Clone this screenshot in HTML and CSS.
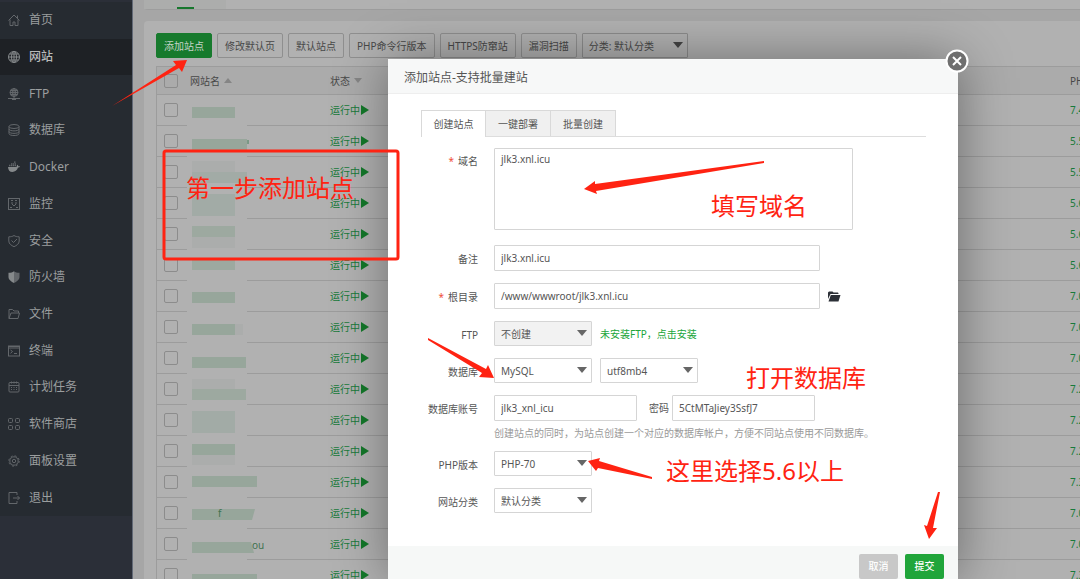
FILE: index.html
```html
<!DOCTYPE html>
<html lang="zh-CN">
<head>
<meta charset="utf-8">
<title>网站</title>
<link rel="stylesheet" href="styles.css">
</head>
<body>
<div class="app">
  <nav class="sidebar">
    <ul class="menu">
      <li><a href="#"><svg viewBox="0 0 12 12"><path d="M.5 6.500 6 1l5.500 5.500M2 5.500v6h3V8h2v3.500h3v-6M9.500 4V1.500"/></svg>首页</a></li>
      <li class="active"><a href="#"><svg viewBox="0 0 12 12"><circle cx="6" cy="6" r="5.500"/><ellipse cx="6" cy="6" rx="2.500" ry="5.500"/><path d="M.5 6h11M6 .5v11M1.500 3h9M1.500 9h9"/></svg>网站</a></li>
      <li><a href="#"><svg viewBox="0 0 12 12"><circle cx="6" cy="4.500" r="4"/><ellipse cx="6" cy="4.500" rx="1.800" ry="4"/><path d="M2 4.500h8M2.500 2.500h7M2.500 6.500h7M6 .5v10M0 10.500h12M4 11.500h4"/></svg>FTP</a></li>
      <li><a href="#"><svg viewBox="0 0 12 12"><ellipse cx="6" cy="2.500" rx="5" ry="2"/><path d="M1 2.500v7c0 2.700 10 2.700 10 0v-7M1 5c0 2.500 10 2.500 10 0M1 7.500c0 2.500 10 2.500 10 0"/></svg>数据库</a></li>
      <li><a href="#"><svg viewBox="0 0 12 12"><path class="solid" d="M0 6h8.500c.5-.8.2-1.500.8-2.200.8.500.9 1 .9 1.400.8-.1 1.400 0 1.800.3-.3.800-1 1.100-2 1.100C9 9.500 7 11 4.500 11 1.500 11 .2 9 0 6z"/><path d="M1 4.500h7M3 2.800h5M6 1.200h2" stroke-dasharray="1.500 .5" stroke-width="1.300"/></svg>Docker</a></li>
      <li><a href="#"><svg viewBox="0 0 12 12"><rect x=".5" y=".5" width="11" height="11"/><path d="M3 2.500h2M7 2.500h2M4 4v2l2 2 2-2V4M2 9.500h2M8 9.500h2"/></svg>监控</a></li>
      <li><a href="#"><svg viewBox="0 0 12 12"><path d="M6 .5C4.500 1.500 3 1.800.8 1.800V6c0 3 2.700 4.500 5.200 5.700C8.500 10.500 11.200 9 11.200 6V1.800C9 1.800 7.500 1.500 6 .5zM3.500 5.500l2 2 3.500-3.500"/></svg>安全</a></li>
      <li><a href="#"><svg viewBox="0 0 12 12"><path class="solid" d="M6 .3C4.500 1.500 3 1.800.5 1.800V6c0 3 3 4.700 5.500 5.900z"/><path class="solid shade" d="M6 .3C7.500 1.500 9 1.800 11.500 1.800V6c0 3-3 4.700-5.500 5.900z"/></svg>防火墙</a></li>
      <li><a href="#"><svg viewBox="0 0 12 12"><path d="M1 10.500v-9h3.500L6 3h4.500v2M1 10.500 3 5h8.500l-1.500 5.500z"/></svg>文件</a></li>
      <li><a href="#"><svg viewBox="0 0 12 12"><rect x=".5" y="1" width="11" height="10"/><path d="M.5 1.500h11M.5 3h11M2.500 5l2 1.500-2 1.800M6 8.500h3"/></svg>终端</a></li>
      <li><a href="#"><svg viewBox="0 0 12 12"><rect x="1" y="1.500" width="10" height="9.500" rx="1"/><path d="M1 4.500h10M3.500.5v2M6 .5v2M8.500.5v2M3 6.500h1M5.500 6.500h1M8 6.500h1M3 8.500h1M5.500 8.500h1M8 8.500h1"/></svg>计划任务</a></li>
      <li><a href="#"><svg viewBox="0 0 12 12"><rect x=".5" y=".5" width="4" height="4" rx="1"/><rect x="7.500" y=".5" width="4" height="4" rx="1"/><rect x=".5" y="7.500" width="4" height="4" rx="1"/><rect x="7.500" y="7.500" width="4" height="4" rx="1"/></svg>软件商店</a></li>
      <li><a href="#"><svg viewBox="0 0 12 12"><circle cx="6" cy="6" r="4.200"/><circle cx="6" cy="6" r="1.700"/><circle cx="6" cy="6" r="5.200" stroke-dasharray="2 2.080"/></svg>面板设置</a></li>
      <li><a href="#"><svg viewBox="0 0 12 12"><path d="M9 3V.5H1v11h8V9M5 6h6.500M9.500 4l2 2-2 2"/></svg>退出</a></li>
    </ul>
  </nav>

  <main class="content">
    <div class="tabstrip"><span class="tabstrip-item"></span></div>
    <section class="panel">
      <div class="toolbar">
        <button class="btn primary">添加站点</button>
        <button class="btn">修改默认页</button>
        <button class="btn">默认站点</button>
        <button class="btn">PHP命令行版本</button>
        <button class="btn">HTTPS防窜站</button>
        <button class="btn">漏洞扫描</button>
        <span class="select filter"><select aria-label="分类"><option>分类: 默认分类</option></select></span>
      </div>
      <table class="sites">
        <colgroup><col class="col-check"><col class="col-name"><col><col class="col-php"></colgroup>
        <thead>
          <tr><th><input type="checkbox" aria-label="全选"></th><th>网站名<i class="sort up"></i></th><th>状态<i class="sort down"></i></th><th>PHP</th></tr>
        </thead>
        <tbody>
          <tr><td><input type="checkbox" aria-label="选择"></td><td><svg class="mosaic"><rect x="5" y="11" width="43" height="11"/></svg></td><td>运行中<i class="play"></i></td><td>7.4</td></tr>
          <tr><td><input type="checkbox" aria-label="选择"></td><td><svg class="mosaic"><rect x="5" y="12" width="55" height="11"/><path d="M61 13v4" stroke="#45805a"/></svg></td><td>运行中<i class="play"></i></td><td>5.5</td></tr>
          <tr><td><input type="checkbox" aria-label="选择"></td><td><svg class="mosaic"><rect class="faint" x="5" y="3" width="43" height="11"/><rect class="pale" x="5" y="14" width="55" height="11"/></svg></td><td>运行中<i class="play"></i></td><td>5.5</td></tr>
          <tr><td><input type="checkbox" aria-label="选择"></td><td><svg class="mosaic"><rect class="pale" x="5" y="5" width="43" height="22"/></svg></td><td>运行中<i class="play"></i></td><td>5.6</td></tr>
          <tr><td><input type="checkbox" aria-label="选择"></td><td><svg class="mosaic"><rect class="mid" x="5" y="6" width="43" height="11"/><rect class="faint" x="5" y="17" width="43" height="11"/></svg></td><td>运行中<i class="play"></i></td><td>5.6</td></tr>
          <tr><td><input type="checkbox" aria-label="选择"></td><td><svg class="mosaic"><rect class="mid" x="5" y="8" width="43" height="11"/></svg></td><td>运行中<i class="play"></i></td><td>5.6</td></tr>
          <tr><td><input type="checkbox" aria-label="选择"></td><td><svg class="mosaic"><rect x="5" y="10" width="43" height="11"/></svg></td><td>运行中<i class="play"></i></td><td>7.0</td></tr>
          <tr><td><input type="checkbox" aria-label="选择"></td><td><svg class="mosaic"><rect x="5" y="11" width="43" height="11"/><rect class="faint" x="48" y="11" width="8" height="11"/></svg></td><td>运行中<i class="play"></i></td><td>7.0</td></tr>
          <tr><td><input type="checkbox" aria-label="选择"></td><td><svg class="mosaic"><rect x="5" y="13" width="54" height="11"/></svg></td><td>运行中<i class="play"></i></td><td>7.0</td></tr>
          <tr><td><input type="checkbox" aria-label="选择"></td><td><svg class="mosaic"><rect class="faint" x="5" y="4" width="43" height="10"/><rect class="mid" x="5" y="14" width="54" height="11"/></svg></td><td>运行中<i class="play"></i></td><td>7.2</td></tr>
          <tr><td><input type="checkbox" aria-label="选择"></td><td><svg class="mosaic"><rect class="pale" x="5" y="5" width="43" height="22"/></svg></td><td>运行中<i class="play"></i></td><td>7.2</td></tr>
          <tr><td><input type="checkbox" aria-label="选择"></td><td><svg class="mosaic"><rect x="5" y="7" width="43" height="11"/><rect class="faint" x="5" y="18" width="43" height="10"/></svg></td><td>运行中<i class="play"></i></td><td>7.2</td></tr>
          <tr><td><input type="checkbox" aria-label="选择"></td><td><svg class="mosaic"><rect x="5" y="8" width="65" height="11"/></svg></td><td>运行中<i class="play"></i></td><td>7.3</td></tr>
          <tr><td><input type="checkbox" aria-label="选择"></td><td><svg class="mosaic"><path d="M5 10h63l-3 11H5z"/><text x="31" y="18">f</text></svg></td><td>运行中<i class="play"></i></td><td>7.0</td></tr>
          <tr><td><input type="checkbox" aria-label="选择"></td><td><svg class="mosaic"><path d="M5 12h59l3 11H5z"/><text x="65" y="19">ou</text></svg></td><td>运行中<i class="play"></i></td><td>7.0</td></tr>
          <tr><td><input type="checkbox" aria-label="选择"></td><td><svg class="mosaic"><rect x="5" y="13" width="65" height="11"/></svg></td><td>运行中<i class="play"></i></td><td>7.3</td></tr>
        </tbody>
      </table>
    </section>
  </main>
</div>

<div class="dialog" role="dialog" aria-labelledby="dialog-title">
  <button class="close" aria-label="关闭"><svg viewBox="0 0 24 24"><circle cx="12" cy="12" r="10.500"/><path d="m8 8 8 8M16 8l-8 8"/></svg></button>
  <h1 class="dialog-title" id="dialog-title">添加站点-支持批量建站</h1>
  <div class="dialog-body">
    <div class="tabs" role="tablist">
      <button class="tab current" role="tab">创建站点</button>
      <button class="tab" role="tab">一键部署</button>
      <button class="tab" role="tab">批量创建</button>
    </div>
    <form class="form" id="site-form">
      <label class="top" for="domain"><b>*</b>域名</label>
      <div><textarea id="domain">jlk3.xnl.icu</textarea></div>
      <label for="note">备注</label>
      <div><input class="long" id="note" type="text" value="jlk3.xnl.icu"></div>
      <label for="root"><b>*</b>根目录</label>
      <div><input class="long" id="root" type="text" value="/www/wwwroot/jlk3.xnl.icu"><svg class="folder" viewBox="0 0 14 11"><path d="M1 8V1.500L2 .5h3.500l1 1H11l.7 1.500H3.500z"/><path d="M3.800 4H13.500l-2 6.500H1.500z"/></svg></div>
      <label for="ftp">FTP</label>
      <div><span class="select disabled"><select id="ftp"><option>不创建</option></select></span><a class="install" href="#">未安装FTP，点击安装</a></div>
      <label for="db">数据库</label>
      <div><span class="select"><select id="db"><option>MySQL</option></select></span><span class="select"><select aria-label="字符集"><option>utf8mb4</option></select></span></div>
      <label for="account">数据库账号</label>
      <div><input id="account" type="text" value="jlk3_xnl_icu"><label class="inline" for="password">密码</label><input id="password" type="text" value="5CtMTaJiey3SsfJ7"></div>
      <p class="hint">创建站点的同时，为站点创建一个对应的数据库帐户，方便不同站点使用不同数据库。</p>
      <label for="php">PHP版本</label>
      <div><span class="select"><select id="php"><option>PHP-70</option></select></span></div>
      <label for="category">网站分类</label>
      <div><span class="select"><select id="category"><option>默认分类</option></select></span></div>
    </form>
  </div>
  <div class="dialog-footer">
    <button class="action cancel">取消</button>
    <button class="action submit" form="site-form">提交</button>
  </div>
</div>

<div class="notes">
  <svg class="marks">
    <rect x="164" y="151" width="234" height="108" rx="2"/>
    <path d="M112 106 176 65 173 61 187 60 182 72 179 68Z"/>
    <path d="M764 161 595 184 595 181 584 189 597 194 596 191 764 163Z"/>
    <path d="M428 338 486 369 488 365 494 378 479 377 482 373 428 340Z"/>
    <path d="M652 479 598 468 596 471 588 461 600 458 599 461 652 477Z"/>
    <path d="M938 492 927 526 924 525 929 539 937 528 933 528 940 492Z"/>
  </svg>
  <span class="note step">第一步添加站点</span>
  <span class="note domain">填写域名</span>
  <span class="note database">打开数据库</span>
  <span class="note version">这里选择5.6以上</span>
</div>
</body>
</html>
```

FILE: styles.css
```css
* { box-sizing: border-box; }

body {
  margin: 0;
  height: 100vh;
  overflow: hidden;
  position: relative;
  background: #a6a6a6;
  color: #484848;
  font: 10px/16px "Noto Sans", "Noto Sans CJK SC", sans-serif;
}

button, input, select, textarea {
  margin: 0;
  font: inherit;
  color: inherit;
}

a { text-decoration: none; }

.app { display: flex; height: 100%; }

/* Sidebar */
.sidebar {
  flex: none;
  width: 133px;
  background: #2b2f38;
  border-right: 1px solid #626976;
}

.menu {
  display: grid;
  grid-template-rows: repeat(14, 1fr);
  height: 514px;
  margin: 2px 0 0;
  padding: 0;
  list-style: none;
  background: #262b31;
}

.menu li { display: flex; }
.menu .active { background: #1e2125; }

.menu a {
  flex: 1;
  display: flex;
  align-items: center;
  gap: 9px;
  padding-left: 8px;
  color: #9b9e9f;
  font-size: 12px;
}

.menu svg {
  width: 12px;
  height: 12px;
  fill: none;
  stroke: #63676b;
  stroke-width: 1;
}

.menu .solid { fill: #85898b; stroke: none; }
.menu .shade { fill: #63676b; }
.menu .active a { color: #b8baba; font-weight: 500; }
.menu .active svg { stroke: #85898b; }

/* Main area */
.content {
  flex: 1;
  min-width: 0;
  padding-left: 11px;
  overflow: hidden;
}

.tabstrip {
  height: 10px;
  background: #b1b1b1;
  border-bottom: 1px solid #9d9d9d;
  border-radius: 0 0 0 4px;
}

.tabstrip-item {
  display: flex;
  align-items: flex-end;
  justify-content: center;
  width: 82px;
  height: 9px;
  background: #acadac;
}

.tabstrip-item::after {
  content: "";
  width: 17px;
  height: 2px;
  background: #17772d;
}

.panel {
  margin-top: 11px;
  padding: 12px 0 0 12px;
  background: #b1b1b1;
  border-radius: 4px 0 0 0;
}

.toolbar { display: flex; gap: 5px; margin-bottom: 8px; }

.toolbar > * { flex: none; height: 25px; }

.btn {
  padding: 0 7px;
  background: #b1b1b1;
  border: 1px solid #8f8f8f;
  border-radius: 2px;
  white-space: nowrap;
}

.btn.primary { background: #177a2d; border-color: #177a2d; color: #c3d3c6; }

.select { position: relative; display: inline-flex; width: 98px; height: 25px; }

.select select {
  width: 100%;
  padding: 0 20px 0 6px;
  appearance: none;
  background: #fff;
  border: 1px solid #d5d5d5;
  border-radius: 1px;
}

.select::after {
  content: "";
  position: absolute;
  top: 9px;
  right: 5px;
  border: 5px solid transparent;
  border-top: 6px solid #666;
  border-bottom: 0;
  pointer-events: none;
}

.select.disabled select { background: #f2f2f2; }
.select.filter { width: 106px; }
.select.filter select { background: #b1b1b1; border-color: #8c8c8c; }
.select.filter::after { border-top-color: #444; }

.sites {
  width: 100%;
  table-layout: fixed;
  border-collapse: separate;
  border-spacing: 0;
  border-top: 1px solid #9c9c9c;
  border-left: 1px solid #9c9c9c;
}

.col-check { width: 30px; }
.col-name { width: 143px; }
.col-php { width: 10px; }

.sites th, .sites td {
  height: 31px;
  padding: 0;
  border-bottom: 1px solid #9c9c9c;
  text-align: left;
  font-weight: 400;
  white-space: nowrap;
}

.sites th { height: 28px; background: #ababab; }
.sites th:nth-child(2) { padding-left: 3px; }
.sites td { color: #177a3a; }

.sites td:nth-child(2) {
  border-bottom: 0;
  background: linear-gradient(#9c9c9c, #9c9c9c) 60px 100% / 100% 1px no-repeat;
  background-position: left 60px bottom;
}

.sites tr > :first-child { padding-left: 7px; }

.sites input {
  display: block;
  width: 14px;
  height: 14px;
  appearance: none;
  border: 1px solid #8c8c8c;
  border-radius: 2px;
}

.sort { display: inline-block; margin: 0 0 2px 4px; border: 4px solid transparent; }
.sort.up { border-bottom: 5px solid #858585; border-top: 0; }
.sort.down { border-top: 5px solid #858585; border-bottom: 0; }

.play {
  display: inline-block;
  margin-left: 1px;
  vertical-align: -1px;
  border: 5px solid transparent;
  border-left: 8px solid #14792a;
  border-right: 0;
}

.mosaic { display: block; width: 82px; height: 30px; fill: #97a69b; }
.mosaic .mid { fill: #9da9a0; }
.mosaic .pale { fill: #a2aba6; }
.mosaic .faint { fill: #abadac; }
.mosaic text { fill: #3f7350; font-size: 10px; }

/* Dialog */
.dialog {
  position: absolute;
  top: 59px;
  bottom: 0;
  left: 388px;
  width: 570px;
  display: flex;
  flex-direction: column;
  background: #fff;
  box-shadow: 1px 1px 50px rgba(0, 0, 0, .4);
  color: #555;
}

.close {
  position: absolute;
  top: -10px;
  right: -11px;
  width: 24px;
  height: 24px;
  padding: 0;
  background: none;
  border: 0;
}

.close svg { display: block; fill: #6f6f6f; stroke: #fff; stroke-width: 2; }

.dialog-title {
  flex: none;
  margin: 0;
  padding: 3px 0 0 16px;
  background: #f7f8f8;
  border-bottom: 1px solid #eee;
  font-size: 12px;
  font-weight: 400;
  line-height: 31px;
}

.dialog-body { flex: 1; padding: 16px 32px 0 33px; }

.tabs { display: flex; height: 27px; border-bottom: 1px solid #ddd; }

.tab {
  width: 65px;
  padding: 0;
  background: #f0f0f0;
  border: 1px solid #d9d9d9;
  border-left-width: 0;
  border-bottom: 0;
}

.tab.current { height: 27px; background: #fff; border-left-width: 1px; }

.form {
  display: grid;
  grid-template-columns: 57px 1fr;
  column-gap: 16px;
  align-items: center;
  margin-top: 11px;
}

.form > div { display: flex; align-items: center; margin-bottom: 12px; }

.form > label {
  justify-self: end;
  margin-bottom: 10px;
  white-space: nowrap;
}

.form > .top { align-self: start; margin-top: 5px; }
.form b { margin-right: 4px; color: #f0503a; font-weight: 400; }

.form textarea, .form input {
  width: 143px;
  height: 26px;
  padding: 0 6px;
  background: #fff;
  border: 1px solid #d5d5d5;
  border-radius: 1px;
}

.form textarea { width: 359px; height: 82px; padding: 2px 6px; margin-bottom: 3px; resize: none; }
.form .long { width: 326px; }
.form .select + .select { margin-left: 8px; }
.form .inline { margin: 0 3px 0 12px; }

.folder { width: 14px; height: 11px; margin-left: 7px; fill: #2c3037; }
.install { margin-left: 8px; color: #20a53a; }

.hint { grid-column: 2; margin: -8px 0 10px; color: #999; white-space: nowrap; }

.dialog-footer {
  flex: none;
  display: flex;
  justify-content: flex-end;
  gap: 7px;
  height: 33px;
  padding: 8px 14px 0 0;
  background: #f6f8f7;
}

.action {
  width: 39px;
  height: 25px;
  padding: 0 0 2px;
  border: 0;
  border-radius: 2px;
  color: #fff;
  font-weight: 500;
}

.cancel { background: #c8c8c8; }
.submit { background: #20a53a; }

/* Annotations drawn over the page */
.notes { position: absolute; inset: 0; pointer-events: none; }
.marks { display: block; width: 100%; height: 100%; fill: #ff2312; }
.marks rect { fill: none; stroke: #ff2312; stroke-width: 3; }

.note {
  position: absolute;
  color: #ff2312;
  font-size: 24px;
  line-height: 32px;
  white-space: nowrap;
}

.note.step { left: 186px; top: 172px; }
.note.domain { left: 711px; top: 190px; }
.note.database { left: 746px; top: 362px; }
.note.version { left: 666px; top: 455px; }
```
